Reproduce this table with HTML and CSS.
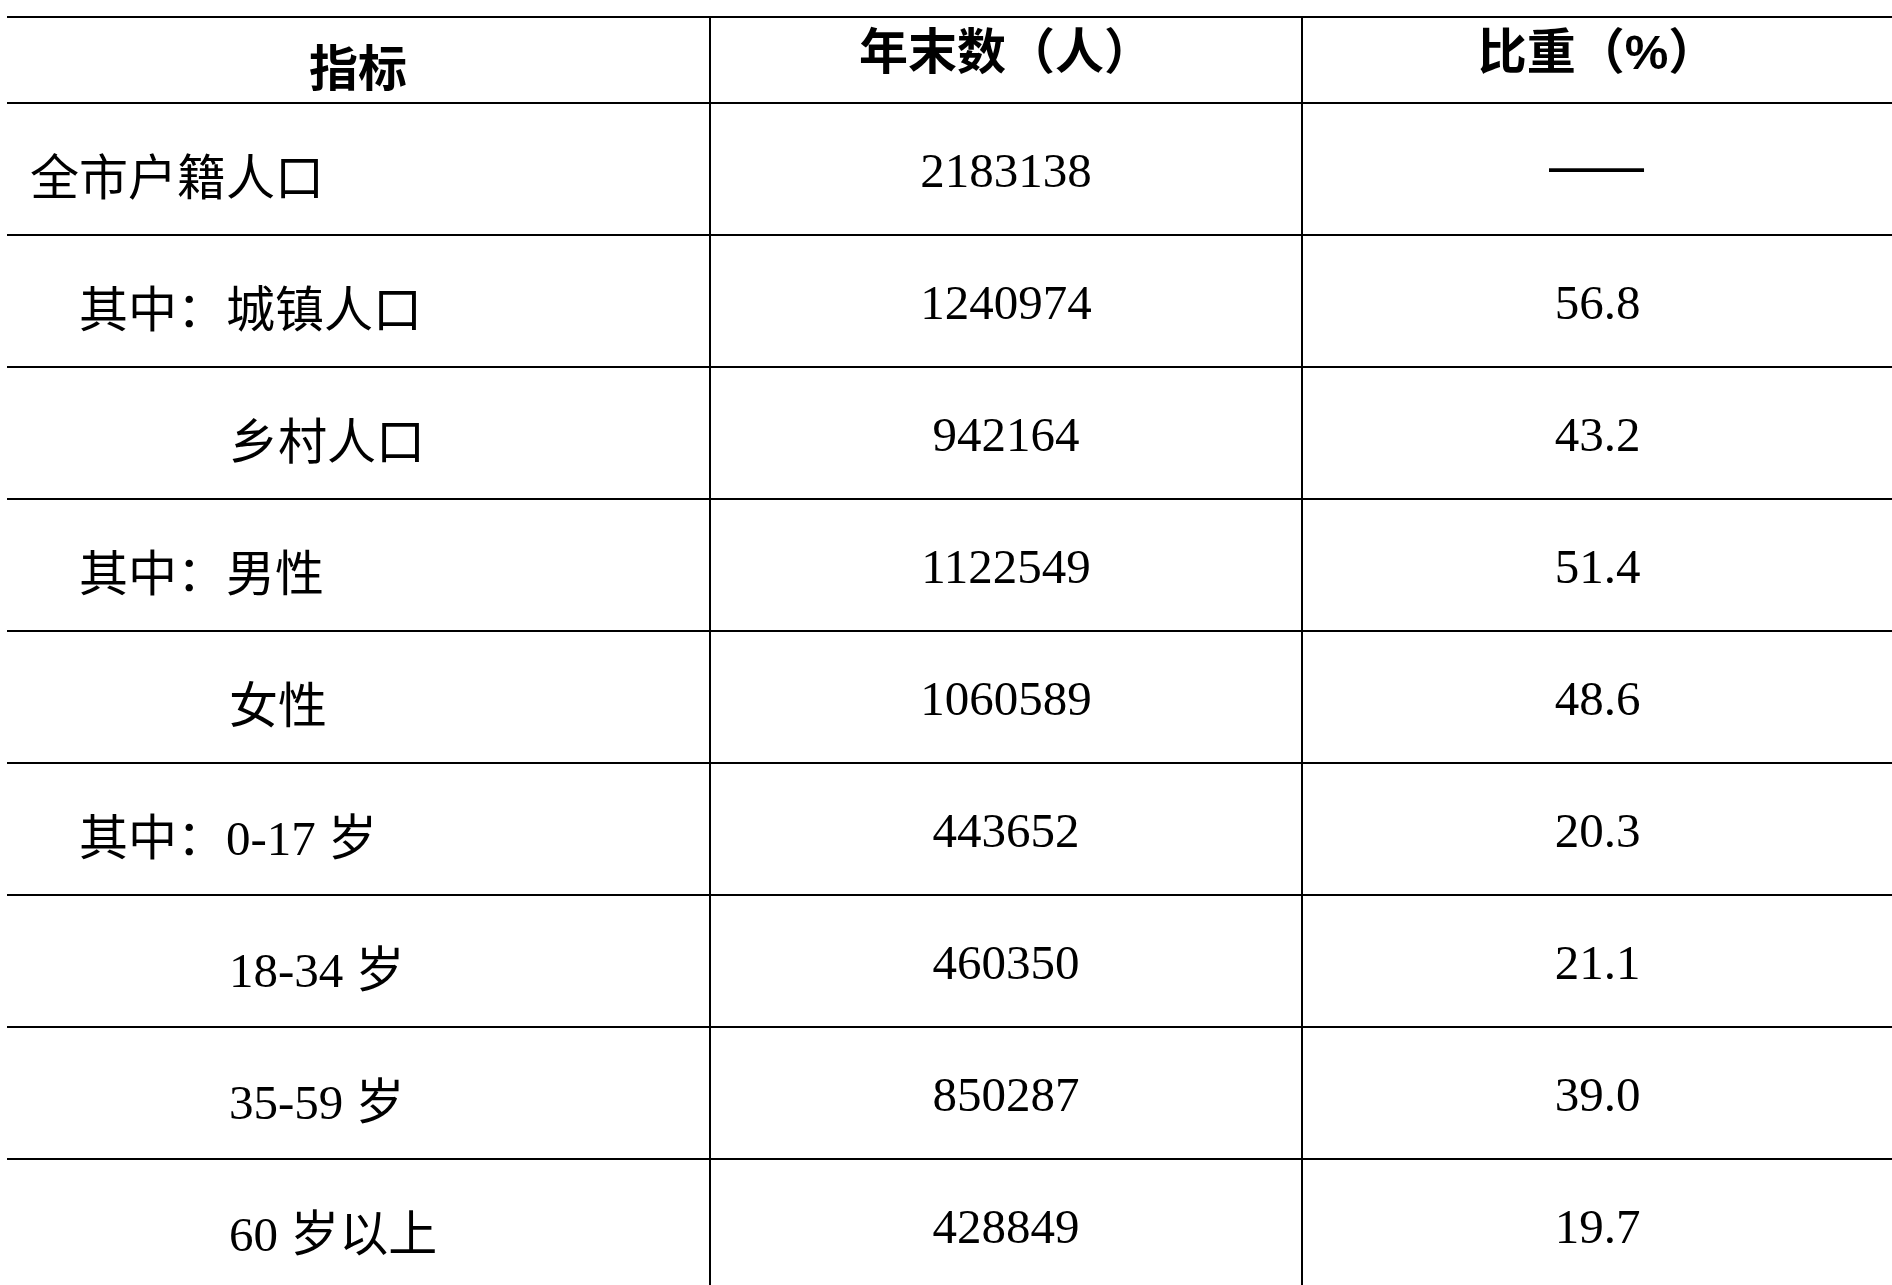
FILE: index.html
```html
<!DOCTYPE html>
<html lang="zh-CN">
<head>
<meta charset="utf-8">
<title>户籍人口</title>
<link rel="stylesheet" href="styles.css">
</head>
<body>
<table class="stats">
  <colgroup>
    <col class="c-name">
    <col class="c-num">
    <col class="c-pct">
  </colgroup>
  <thead>
    <tr>
      <th class="h-name">指标</th>
      <th class="h-val">年末数（人）</th>
      <th class="h-val">比重（%）</th>
    </tr>
  </thead>
  <tbody>
    <tr>
      <td class="name">全市户籍人口</td>
      <td class="val">2183138</td>
      <td class="val"><span class="dash">——</span></td>
    </tr>
    <tr>
      <td class="name l1">其中：城镇人口</td>
      <td class="val">1240974</td>
      <td class="val">56.8</td>
    </tr>
    <tr>
      <td class="name l2">乡村人口</td>
      <td class="val">942164</td>
      <td class="val">43.2</td>
    </tr>
    <tr>
      <td class="name l1">其中：男性</td>
      <td class="val">1122549</td>
      <td class="val">51.4</td>
    </tr>
    <tr>
      <td class="name l2">女性</td>
      <td class="val">1060589</td>
      <td class="val">48.6</td>
    </tr>
    <tr>
      <td class="name l1">其中：0-17 岁</td>
      <td class="val">443652</td>
      <td class="val">20.3</td>
    </tr>
    <tr>
      <td class="name l2">18-34 岁</td>
      <td class="val">460350</td>
      <td class="val">21.1</td>
    </tr>
    <tr>
      <td class="name l2">35-59 岁</td>
      <td class="val">850287</td>
      <td class="val">39.0</td>
    </tr>
    <tr>
      <td class="name l2">60 岁以上</td>
      <td class="val">428849</td>
      <td class="val">19.7</td>
    </tr>
  </tbody>
</table>
</body>
</html>
```

FILE: styles.css
```css
html, body {
  margin: 0;
  padding: 0;
  background: #fff;
  overflow: hidden;
}

.stats {
  margin: 16px 0 0 7px;
  border-collapse: separate;
  border-spacing: 0;
  table-layout: fixed;
  width: 1885px;
  border-top: 2px solid #000;
  color: #000;
}

.c-name { width: 702px; }
.c-num { width: 592px; }
.c-pct { width: 591px; }

.stats th,
.stats td {
  padding: 0;
  vertical-align: top;
  border-bottom: 2px solid #000;
  font-size: 49px;
  line-height: 49px;
  white-space: nowrap;
  box-sizing: border-box;
}

.stats th + th,
.stats td + td {
  border-left: 2px solid #000;
}

.stats thead tr { height: 86px; }
.stats tbody tr { height: 132px; }

.stats th {
  font-family: "Liberation Sans", "Noto Sans CJK SC", sans-serif;
  font-weight: 700;
  text-align: center;
}

.stats .h-name { padding-top: 27px; }
.stats .h-val { padding-top: 10px; }

.stats td {
  font-family: "Liberation Serif", "Noto Sans CJK SC", serif;
  font-weight: 400;
}

.stats .name {
  text-align: left;
  padding-left: 23px;
  padding-top: 50px;
}

.stats .name.l1 { padding-left: 72px; }
.stats .name.l2 { padding-left: 222px; }

.stats .val {
  text-align: center;
  padding-top: 42px;
}

.dash {
  font-family: "Noto Sans CJK SC", sans-serif;
  font-size: 60px;
  letter-spacing: 2px;
  line-height: 0;
}
```
